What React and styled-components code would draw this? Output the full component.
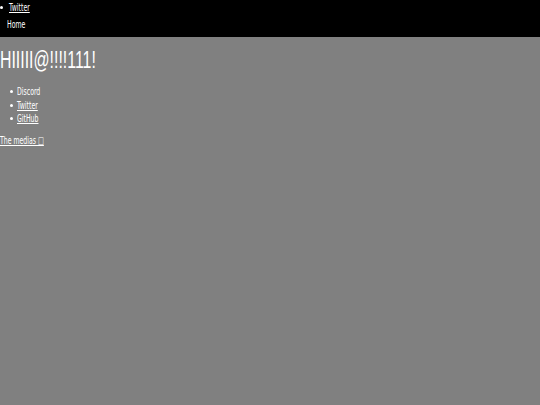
import React from "react";
import styled, { createGlobalStyle } from "styled-components";

const GlobalStyle = createGlobalStyle`
    html, body {
        margin: 0;
        padding: 0;
        background: #808080;
        color: #ffffff;
        font-family: "DejaVu Sans", sans-serif;
        font-size: 10px;
    }
    a {
        color: #ffffff;
    }
`;

// the whole page reads as horizontally squeezed, so text gets scaled on x
const Squish = styled.span`
    display: inline-block;
    transform: scaleX(${(p) => p.$x || 0.62});
    transform-origin: left center;
    white-space: nowrap;
`;

const Header = styled.header`
    background: #000000;
    height: 37px;
    display: flex;
    flex-direction: column;
`;

const TopList = styled.ul`
    margin: 0;
    padding: 2px 0 0 0;
    list-style: none;
`;

const TopItem = styled.li`
    display: flex;
    align-items: center;
    gap: 6px;
    &::before {
        content: "";
        width: 3px;
        height: 3px;
        background: #ffffff;
        border-radius: 50%;
    }
`;

const HomeLink = styled.span`
    padding: 6px 0 0 7px;
`;

const Title = styled.h1`
    font-family: "Liberation Sans", sans-serif;
    font-weight: normal;
    font-size: 23px;
    margin: 10px 0 10px 0;
`;

const MediaList = styled.ul`
    margin: 0;
    padding: 1px 0 0 17px;
    list-style: none;
`;

const MediaItem = styled.li`
    position: relative;
    line-height: 13.5px;
    &::before {
        content: "";
        position: absolute;
        left: -7px;
        top: 5px;
        width: 3px;
        height: 3px;
        background: #ffffff;
        border-radius: 50%;
    }
`;

const Footer = styled.p`
    margin: 9px 0 0 0;
`;

export default function App() {
    return (
        <>
            <GlobalStyle />
            <Header>
                <TopList>
                    <TopItem>
                        <Squish>
                            <a href="#">Twitter</a>
                        </Squish>
                    </TopItem>
                </TopList>
                <HomeLink>
                    <Squish>Home</Squish>
                </HomeLink>
            </Header>
            <Title>
                <Squish $x={0.69}>HIIIII@!!!!111!</Squish>
            </Title>
            <MediaList>
                <MediaItem>
                    <Squish>Discord</Squish>
                </MediaItem>
                <MediaItem>
                    <Squish>
                        <a href="#">Twitter</a>
                    </Squish>
                </MediaItem>
                <MediaItem>
                    <Squish>
                        <a href="#">GitHub</a>
                    </Squish>
                </MediaItem>
            </MediaList>
            <Footer>
                <Squish>
                    <a href="#">The medias □</a>
                </Squish>
            </Footer>
        </>
    );
}
